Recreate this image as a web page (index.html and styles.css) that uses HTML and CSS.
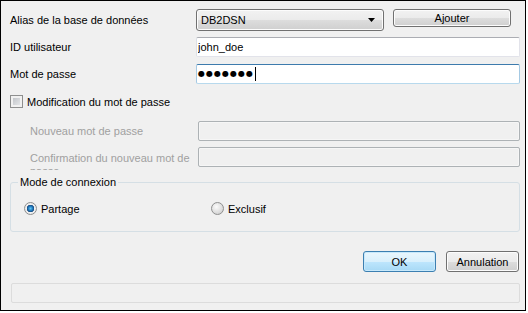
FILE: index.html
```html
<!DOCTYPE html>
<html lang="fr">
<head>
    <meta charset="UTF-8">
    <title>Connexion à la base de données</title>
    <link rel="stylesheet" href="styles.css">
</head>
<body>
    <div class="dialog">
        <div class="row row-alias">
            <label class="lbl">Alias de la base de données</label>
            <div class="combo">
                <span>DB2DSN</span>
                <svg class="arrow" width="7" height="4" viewBox="0 0 7 4"><path d="M0 0h7L3.5 4z" fill="#000"/></svg>
            </div>
            <button class="btn btn-add">Ajouter</button>
        </div>

        <div class="row row-user">
            <label class="lbl">ID utilisateur</label>
            <input class="edit" type="text" value="john_doe">
        </div>

        <div class="row row-pass">
            <label class="lbl">Mot de passe</label>
            <div class="edit edit-focus">
                <span class="dots">●●●●●●●</span><span class="caret"></span>
            </div>
        </div>

        <label class="check-row"><span class="checkbox"></span>Modification du mot de passe</label>

        <div class="row sub row-new">
            <label class="lbl dim">Nouveau mot de passe</label>
            <input class="edit" type="password" disabled>
        </div>

        <div class="row sub row-confirm">
            <label class="lbl dim">Confirmation du nouveau mot de passe</label>
            <input class="edit" type="password" disabled>
        </div>

        <fieldset class="group">
            <legend>Mode de connexion</legend>
            <div class="radios">
                <label class="radio"><span class="dot on"></span>Partage</label>
                <label class="radio"><span class="dot"></span>Exclusif</label>
            </div>
        </fieldset>

        <div class="actions">
            <button class="btn btn-default">OK</button>
            <button class="btn">Annulation</button>
        </div>

        <div class="status"></div>
    </div>
</body>
</html>
```

FILE: styles.css
```css
body {
    margin: 0;
    background-color: #fff;
    font-family: "Liberation Sans", Arial, sans-serif;
    font-size: 11px;
    color: #000;
}

.dialog {
    box-sizing: border-box;
    width: 526px;
    height: 311px;
    border: 1px solid #000;
    background-color: #f0f0f0;
    padding: 8px 5px 0 9px;
}

.row {
    display: flex;
    align-items: center;
}

.lbl {
    width: 186px;
    flex: none;
}

.row-alias {
    align-items: flex-start;
    height: 22px;
}

.row-alias .lbl {
    line-height: 22px;
}

.combo {
    box-sizing: border-box;
    width: 188px;
    height: 22px;
    display: flex;
    align-items: center;
    justify-content: space-between;
    padding: 0 8px 0 4px;
    border: 1px solid #707070;
    border-radius: 3px;
    background: linear-gradient(#f2f2f2 0%, #ebebeb 50%, #dddddd 51%, #cfcfcf 100%);
    box-shadow: inset 0 0 0 1px #fcfcfc;
}

.btn {
    box-sizing: border-box;
    height: 21px;
    padding: 0;
    font-family: inherit;
    font-size: 11px;
    color: #000;
    border: 1px solid #707070;
    border-radius: 3px;
    background: linear-gradient(#f2f2f2 0%, #ebebeb 50%, #dddddd 51%, #cfcfcf 100%);
    box-shadow: inset 0 0 0 1px #fcfcfc;
}

.btn-add {
    width: 118px;
    height: 18px;
    margin-left: 9px;
}

.btn-default {
    border-color: #3c7fb1;
    background: linear-gradient(#eaf6fd 0%, #d9f0fc 50%, #bee6fd 51%, #a7d9f5 100%);
    box-shadow: inset 0 0 0 1px #c8e9fb;
}

.edit {
    box-sizing: border-box;
    flex: 1;
    height: 20px;
    margin: 0;
    padding: 0 1px;
    font-family: inherit;
    font-size: 11px;
    color: #000;
    background-color: #fff;
    border: 1px solid #e2e3ea;
    border-top-color: #abadb3;
    border-left-color: #dbdfe6;
    border-radius: 2px;
    outline: none;
}

.row-user {
    margin-top: 6px;
}

.row-pass {
    margin-top: 7px;
}

.edit-focus {
    display: flex;
    align-items: center;
    border-color: #a4c9e3;
    border-top-color: #3d7bad;
    border-bottom-color: #b7d9ed;
}

.dots {
    font-family: "DejaVu Sans", sans-serif;
    font-size: 8px;
    letter-spacing: 1px;
    line-height: 1;
}

.caret {
    width: 1px;
    height: 14px;
    margin-left: 1px;
    background-color: #000;
}

.check-row {
    display: flex;
    align-items: center;
    height: 13px;
    margin-top: 11px;
    gap: 4px;
}

.checkbox {
    box-sizing: border-box;
    width: 13px;
    height: 13px;
    border: 1px solid #8e8f8f;
    background: linear-gradient(135deg, #b9bcc1, #eceef0);
    box-shadow: inset 0 0 0 2px #f1f1f1;
}

.sub .lbl {
    box-sizing: border-box;
    width: 188px;
    padding-left: 20px;
}

.dim {
    color: #a0a0a0;
}

.edit:disabled {
    background-color: #f0f0f0;
    border: 1px solid #adb2b5;
    box-shadow: inset 0 0 0 1px #f6f6f6;
}

.row-new {
    margin-top: 13px;
}

.row-confirm {
    margin-top: 6px;
    align-items: flex-start;
}

.row-confirm .lbl {
    height: 23px;
    padding-top: 5px;
    line-height: 13px;
    overflow: hidden;
}

.group {
    margin: 5px 0 0;
    padding: 13px 7px 16px;
    border: 1px solid #d5dfe5;
    border-radius: 3px;
}

.group legend {
    padding: 0 2px;
    line-height: 14px;
}

.radios {
    display: flex;
    height: 13px;
    padding-left: 6px;
}

.radio {
    display: flex;
    align-items: center;
    gap: 4px;
    width: 187px;
}

.dot {
    box-sizing: border-box;
    width: 13px;
    height: 13px;
    border-radius: 50%;
    border: 1px solid #8e8f8f;
    background: radial-gradient(circle at 40% 35%, #fbfbfb 0%, #dcdcdc 60%, #c4c4c4 100%);
}

.dot.on {
    background: radial-gradient(circle, #5fc7f7 0%, #1a6fb3 2.5px, #1a4c80 3.5px, #f0f0f0 4px, #e1e1e1 100%);
}

.actions {
    display: flex;
    justify-content: flex-end;
    gap: 10px;
    margin-top: 19px;
    padding-right: 1px;
}

.actions .btn {
    width: 73px;
}

.status {
    box-sizing: border-box;
    height: 20px;
    margin: 11px 0 0 1px;
    border: 1px solid #dcdcdc;
    border-radius: 2px;
}
```
